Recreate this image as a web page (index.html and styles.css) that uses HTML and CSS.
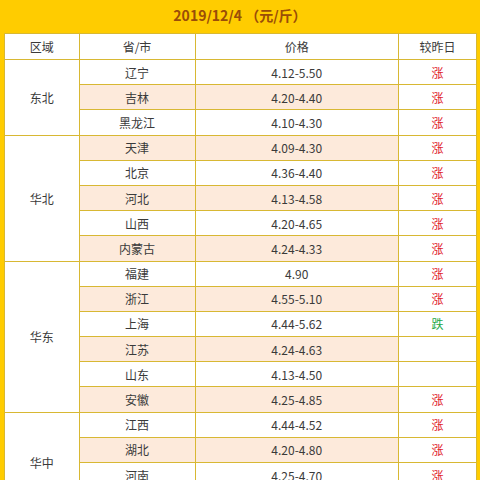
FILE: index.html
```html
<!DOCTYPE html>
<html lang="zh-CN">
<head>
<meta charset="utf-8">
<link rel="stylesheet" href="styles.css">
</head>
<body>
<div class="page">
  <div class="title">2019/12/4 （元/斤）</div>
  <table class="price">
    <colgroup>
      <col class="c-region"><col class="c-prov"><col class="c-price"><col class="c-chg">
    </colgroup>
    <thead>
      <tr><th>区域</th><th>省/市</th><th>价格</th><th>较昨日</th></tr>
    </thead>
    <tbody>
      <tr><td class="region" rowspan="3">东北</td><td>辽宁</td><td>4.12-5.50</td><td class="up">涨</td></tr>
      <tr class="alt"><td>吉林</td><td>4.20-4.40</td><td class="up">涨</td></tr>
      <tr><td>黑龙江</td><td>4.10-4.30</td><td class="up">涨</td></tr>

      <tr class="alt"><td class="region" rowspan="5">华北</td><td>天津</td><td>4.09-4.30</td><td class="up">涨</td></tr>
      <tr><td>北京</td><td>4.36-4.40</td><td class="up">涨</td></tr>
      <tr class="alt"><td>河北</td><td>4.13-4.58</td><td class="up">涨</td></tr>
      <tr><td>山西</td><td>4.20-4.65</td><td class="up">涨</td></tr>
      <tr class="alt"><td>内蒙古</td><td>4.24-4.33</td><td class="up">涨</td></tr>

      <tr><td class="region" rowspan="6">华东</td><td>福建</td><td>4.90</td><td class="up">涨</td></tr>
      <tr class="alt"><td>浙江</td><td>4.55-5.10</td><td class="up">涨</td></tr>
      <tr><td>上海</td><td>4.44-5.62</td><td class="down">跌</td></tr>
      <tr class="alt"><td>江苏</td><td>4.24-4.63</td><td class="up"></td></tr>
      <tr><td>山东</td><td>4.13-4.50</td><td class="up"></td></tr>
      <tr class="alt"><td>安徽</td><td>4.25-4.85</td><td class="up">涨</td></tr>

      <tr><td class="region" rowspan="4">华中</td><td>江西</td><td>4.44-4.52</td><td class="up">涨</td></tr>
      <tr class="alt"><td>湖北</td><td>4.20-4.80</td><td class="up">涨</td></tr>
      <tr><td>河南</td><td>4.25-4.70</td><td class="up">涨</td></tr>
      <tr class="alt"><td>湖南</td><td>4.30-4.60</td><td class="up">涨</td></tr>
    </tbody>
  </table>
</div>
</body>
</html>
```

FILE: styles.css
```css
html, body {
  margin: 0;
  padding: 0;
  overflow: hidden;
  background: #ffcc00;
}
.page {
  width: 480px;
  padding: 0 4px;
  box-sizing: border-box;
  font-family: "Noto Sans CJK SC", "Noto Sans", sans-serif;
}
.title {
  height: 33px;
  line-height: 30px;
  text-align: center;
  font-size: 14px;
  font-weight: bold;
  color: #9a4d08;
}
.price {
  width: 472px;
  border-collapse: collapse;
  table-layout: fixed;
  background: #ffffff;
  border: 1px solid #d4b22a;
  font-size: 12px;
  color: #3a3a3a;
}
.c-region { width: 74.5px; }
.c-prov { width: 116px; }
.c-price { width: 203.5px; }
.c-chg { width: 78px; }
.price th, .price td {
  border: 1px solid #d8b833;
  height: 25.2px;
  padding: 0;
  text-align: center;
  vertical-align: middle;
  font-weight: normal;
  box-sizing: border-box;
}
.price th {
  height: 26px;
}
.price tr.alt td {
  background: #fdeadb;
}
.price tr.alt td.up,
.price tr.alt td.down,
.price tr.alt td.region {
  background: #ffffff;
}
.up { color: #e0202b; }
.down { color: #22a845; }
```
